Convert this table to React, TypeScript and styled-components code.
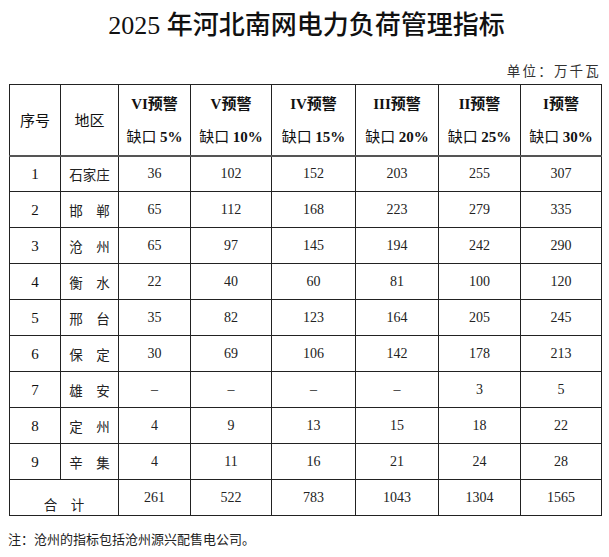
import React from "react";
import styled, { createGlobalStyle } from "styled-components";

const Global = createGlobalStyle`
  html, body { margin: 0; padding: 0; background: #fff; }
  body { font-family: "Liberation Serif", "Noto Sans CJK SC", serif; color: #111; }
`;

const Page = styled.div`
  width: 609px;
  height: 557px;
  box-sizing: border-box;
  padding: 8px 0 0 0;
  display: flex;
  flex-direction: column;
`;

const Title = styled.h1`
  margin: 0;
  font-weight: 500;
  font-size: 26px;
  line-height: 30px;
  text-align: center;
  font-family: "Liberation Serif", "Noto Sans CJK SC", serif;
  color: #111;
  padding-left: 4px;
`;

const TitleCjk = styled.span`
  font-family: "Noto Sans CJK SC", sans-serif;
  font-weight: 500;
`;

const Unit = styled.div`
  margin-top: 20px;
  align-self: flex-end;
  padding-right: 8px;
  font-family: "Noto Sans CJK SC", sans-serif;
  font-size: 13.5px;
  line-height: 18px;
  letter-spacing: 2.2px;
  color: #333;
`;

const Table = styled.table`
  margin: 5px 0 0 9px;
  width: 592px;
  table-layout: fixed;
  border-collapse: collapse;
  border: 1.5px solid #111;
`;

const Cell = styled.td<{ $cjk?: boolean }>`
  border: 1px solid #222;
  padding: 0;
  text-align: center;
  vertical-align: middle;
  font-size: 14px;
  line-height: 18px;
  color: #222;
  font-family: ${(p) =>
    p.$cjk
      ? `"Noto Sans CJK SC", sans-serif`
      : `"Liberation Serif", "Noto Sans CJK SC", serif`};
  ${(p) => (p.$cjk ? "font-size: 13.5px;" : "")}
`;

const HeadCell = styled.th`
  border: 1px solid #222;
  border-bottom: 2px solid #555;
  padding: 0;
  text-align: center;
  vertical-align: middle;
  font-weight: 400;
  font-size: 15px;
  color: #111;
  font-family: "Noto Sans CJK SC", sans-serif;
`;

const HeadStack = styled.div`
  display: flex;
  flex-direction: column;
  align-items: center;
  gap: 10px;
`;

const HeadLine = styled.div`
  line-height: 22px;
  white-space: nowrap;
`;

const Bold = styled.span`
  font-family: "Liberation Serif", serif;
  font-weight: 700;
`;

const BoldCjk = styled.span`
  font-family: "Noto Sans CJK SC", sans-serif;
  font-weight: 700;
`;

const HeadRow = styled.tr`
  height: 71px;
`;

const Row = styled.tr`
  height: 36px;
`;

const IndexCell = styled(Cell)`
  font-size: 15px;
  color: #111;
`;

const TotalLabel = styled(Cell)`
  padding-top: 12px;
  line-height: 20px;
`;

const Note = styled.div`
  margin: 14px 0 0 8px;
  font-family: "Noto Sans CJK SC", sans-serif;
  font-size: 13px;
  line-height: 18px;
  color: #222;
`;

const levels = [
  ["VI", "5%"],
  ["V", "10%"],
  ["IV", "15%"],
  ["III", "20%"],
  ["II", "25%"],
  ["I", "30%"],
];

const rows: [string, string, string[]][] = [
  ["1", "石家庄", ["36", "102", "152", "203", "255", "307"]],
  ["2", "邯　郸", ["65", "112", "168", "223", "279", "335"]],
  ["3", "沧　州", ["65", "97", "145", "194", "242", "290"]],
  ["4", "衡　水", ["22", "40", "60", "81", "100", "120"]],
  ["5", "邢　台", ["35", "82", "123", "164", "205", "245"]],
  ["6", "保　定", ["30", "69", "106", "142", "178", "213"]],
  ["7", "雄　安", ["–", "–", "–", "–", "3", "5"]],
  ["8", "定　州", ["4", "9", "13", "15", "18", "22"]],
  ["9", "辛　集", ["4", "11", "16", "21", "24", "28"]],
];

const totals = ["261", "522", "783", "1043", "1304", "1565"];

const widths = [51, 58, 72, 81, 84, 83, 82, 81];

export default function App() {
  return (
    <>
      <Global />
      <Page>
        <Title>
          2025 <TitleCjk>年河北南网电力负荷管理指标</TitleCjk>
        </Title>
        <Unit>单位：万千瓦</Unit>
        <Table>
          <colgroup>
            {widths.map((w, i) => (
              <col key={i} style={{ width: w }} />
            ))}
          </colgroup>
          <thead>
            <HeadRow>
              <HeadCell>序号</HeadCell>
              <HeadCell>地区</HeadCell>
              {levels.map(([lv, pct]) => (
                <HeadCell key={lv}>
                  <HeadStack>
                    <HeadLine>
                      <Bold>{lv}</Bold>
                      <BoldCjk>预警</BoldCjk>
                    </HeadLine>
                    <HeadLine>
                      缺口 <Bold>{pct}</Bold>
                    </HeadLine>
                  </HeadStack>
                </HeadCell>
              ))}
            </HeadRow>
          </thead>
          <tbody>
            {rows.map(([n, name, vals]) => (
              <Row key={n}>
                <IndexCell>{n}</IndexCell>
                <Cell $cjk>{name}</Cell>
                {vals.map((v, i) => (
                  <Cell key={i}>{v}</Cell>
                ))}
              </Row>
            ))}
            <Row>
              <TotalLabel $cjk colSpan={2}>
                合　计
              </TotalLabel>
              {totals.map((v, i) => (
                <Cell key={i}>{v}</Cell>
              ))}
            </Row>
          </tbody>
        </Table>
        <Note>注：沧州的指标包括沧州源兴配售电公司。</Note>
      </Page>
    </>
  );
}
